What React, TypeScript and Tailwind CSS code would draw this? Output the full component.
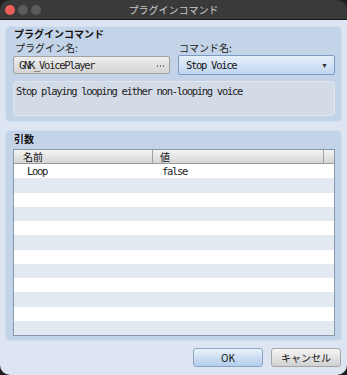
const jp = "font-['Noto_Sans_CJK_JP',sans-serif]";
const mono = "font-['DejaVu_Sans_Mono',monospace] text-[10.5px] tracking-[-1.3px]";

const rows = [
  { name: "Loop", value: "false" },
  ...Array.from({ length: 11 }, () => ({ name: "", value: "" })),
];

export default function App() {
  return (
    <div className="w-[347px] h-[375px] bg-[#1e1e1e] flex flex-col">
      {/* Title bar */}
      <div className="h-[20px] rounded-t-[10px] bg-[#3a3a3a] grid grid-cols-[1fr_auto_1fr] items-center px-[5px] border-b border-[#151515]">
        <div className="flex items-center gap-[3px]">
          <span className="w-[10px] h-[10px] rounded-full bg-[#ee5f57]" />
          <span className="w-[10px] h-[10px] rounded-full bg-[#5b5b5b]" />
          <span className="w-[10px] h-[10px] rounded-full bg-[#5b5b5b]" />
        </div>
        <div className={`${jp} text-[10px] text-[#c9c9c9] leading-none`}>プラグインコマンド</div>
        <div />
      </div>

      {/* Body */}
      <div className="flex-1 bg-[#dce5f1] rounded-b-[10px] px-[5px] pt-[6px] flex flex-col">
        {/* Plugin command group */}
        <div className="h-[96px] rounded-[5px] bg-[#c4d4e8] border border-[#d2dff0] px-[6px] flex flex-col">
          <div className={`${jp} h-[14px] text-[10px] leading-[14px] font-bold text-[#111] pl-[2px]`}>プラグインコマンド</div>
          <div className="grid grid-cols-[157px_157px] gap-x-[8px] pl-[1px]">
            <div className={`${jp} h-[14px] text-[10px] leading-[14px] text-[#222] pl-[2px]`}>プラグイン名:</div>
            <div className={`${jp} h-[14px] text-[10px] leading-[14px] text-[#222] pl-[1px]`}>コマンド名:</div>
            <div className="mt-[1px] h-[18px] rounded-[2px] border border-[#a3a3a3] bg-gradient-to-b from-[#eeeeee] to-[#d4d4d4] flex items-center justify-between pl-[5px] pr-[5px]">
              <span className={`${mono} leading-[12px] text-[#222]`}>GNK_VoicePlayer</span>
              <span className="flex items-center gap-[1.5px] mt-[2px]">
                <span className="w-[1.5px] h-[1.5px] rounded-full bg-[#666]" />
                <span className="w-[1.5px] h-[1.5px] rounded-full bg-[#666]" />
                <span className="w-[1.5px] h-[1.5px] rounded-full bg-[#666]" />
              </span>
            </div>
            <div className="h-[20px] rounded-[2px] border border-[#7b9bc2] bg-gradient-to-b from-[#e6effa] to-[#c0d5ee] flex items-center justify-between pl-[7px] pr-[6px]">
              <span className={`${mono} leading-[12px] text-[#111]`}>Stop Voice</span>
              <span className="text-[7px] text-[#333] leading-none">▼</span>
            </div>
          </div>
          <div className={`mt-[6px] ml-[1px] h-[35px] rounded-[4px] bg-[#d2dbe6] border border-[#e0e7f0] px-[2px] pt-[3px] ${mono} leading-[12px] text-[#222]`}>
            Stop playing looping either non-looping voice
          </div>
        </div>

        {/* Arguments group */}
        <div className="mt-[8px] h-[211px] rounded-[5px] bg-[#c4d4e8] border border-[#d2dff0] px-[6px] flex flex-col">
          <div className={`${jp} h-[18px] text-[10px] leading-[16px] font-bold text-[#111] pl-[2px]`}>引数</div>
          <div className="ml-[1px] h-[187px] border border-[#8797ac] bg-white flex flex-col">
            <div className="h-[14px] shrink-0 grid grid-cols-[139px_171px_1fr] bg-gradient-to-b from-[#f5f5f5] to-[#d6d6d6] border-b border-[#9a9a9a]">
              <div className={`${jp} text-[10px] leading-[13px] text-[#111] pl-[9px] border-r border-[#a2a2a2]`}>名前</div>
              <div className={`${jp} text-[10px] leading-[13px] text-[#111] pl-[7px] border-r border-[#a2a2a2]`}>値</div>
              <div />
            </div>
            <div className="flex-1 flex flex-col">
              {rows.map((r, i) => (
                <div
                  key={i}
                  className={`flex-1 grid grid-cols-[140px_1fr] items-center ${i % 2 === 0 ? "bg-white" : "bg-[#e3e9f1]"}`}
                >
                  <span className={`${mono} leading-[12px] text-[#222] pl-[13px]`}>{r.name}</span>
                  <span className={`${mono} leading-[12px] text-[#222] pl-[8px]`}>{r.value}</span>
                </div>
              ))}
            </div>
          </div>
        </div>

        {/* Buttons */}
        <div className="mt-[7px] flex justify-end gap-[8px] pr-[1px]">
          <button className={`${jp} w-[70px] h-[19px] rounded-[3px] border border-[#8ba6c6] bg-gradient-to-b from-[#e8f1fb] to-[#b3cde9] text-[10px] leading-none text-[#111]`}>
            OK
          </button>
          <button className={`${jp} w-[70px] h-[19px] rounded-[3px] border border-[#a5a5a5] bg-gradient-to-b from-[#f6f6f6] to-[#d0d0d0] text-[10px] leading-none text-[#111]`}>
            キャンセル
          </button>
        </div>
      </div>
    </div>
  );
}
